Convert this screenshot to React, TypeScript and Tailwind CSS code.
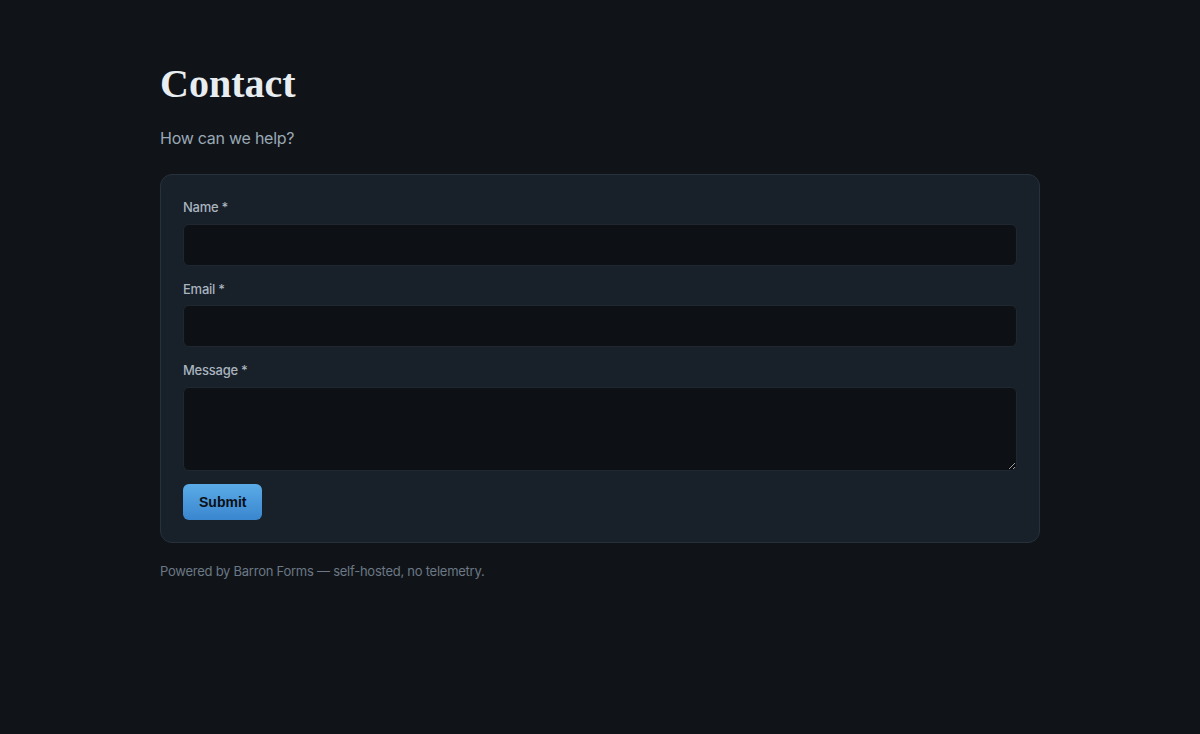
import React from "react";

export default function App() {
  return (
    <div className="min-h-[734px] w-full bg-[#101418] tracking-[-0.25px]" style={{ fontFamily: "Inter, 'Noto Sans', sans-serif" }}>
      <div className="mx-auto w-[880px] pt-[60px]">
        <h1 className="text-[40px] leading-[48px] font-bold tracking-normal text-[#e8edf2]" style={{ fontFamily: "'Liberation Serif', 'DejaVu Serif', serif" }}>
          Contact
        </h1>
        <p className="mt-[18px] text-[16px] leading-[24px] text-[#9aa8b6]">How can we help?</p>
        <form className="mt-[24px] rounded-[12px] border border-[#27313c] bg-[#18202a] px-[22px] pt-[22px] pb-[22px]">
          <div className="flex flex-col">
            <label className="mb-[7px] text-[13px] leading-[20px] font-medium text-[#a9b4bf]">Name *</label>
            <input className="h-[42px] w-full rounded-[6px] border border-[#1f2730] bg-[#0d1014] px-3 text-[#e8edf2] outline-none" />
          </div>
          <div className="mt-[13px] flex flex-col">
            <label className="mb-[6px] text-[13px] leading-[20px] font-medium text-[#a9b4bf]">Email *</label>
            <input className="h-[42px] w-full rounded-[6px] border border-[#1f2730] bg-[#0d1014] px-3 text-[#e8edf2] outline-none" />
          </div>
          <div className="mt-[13px] flex flex-col">
            <label className="mb-[7px] text-[13px] leading-[20px] font-medium text-[#a9b4bf]">Message *</label>
            <textarea className="block h-[84px] w-full rounded-[6px] border border-[#1f2730] bg-[#0d1014] px-3 py-2 text-[#e8edf2] outline-none" />
          </div>
          <button
            type="button"
            className="mt-[13px] h-[36px] rounded-[6px] bg-gradient-to-b from-[#5babe7] to-[#3a86cf] px-[16px] text-[14px] font-bold tracking-normal text-[#0b0f14]"
            style={{ fontFamily: "'Liberation Sans', Arial, sans-serif" }}
          >
            Submit
          </button>
        </form>
        <p className="mt-[18px] text-[13px] leading-[20px] text-[#6c7885]">Powered by Barron Forms — self-hosted, no telemetry.</p>
      </div>
    </div>
  );
}
